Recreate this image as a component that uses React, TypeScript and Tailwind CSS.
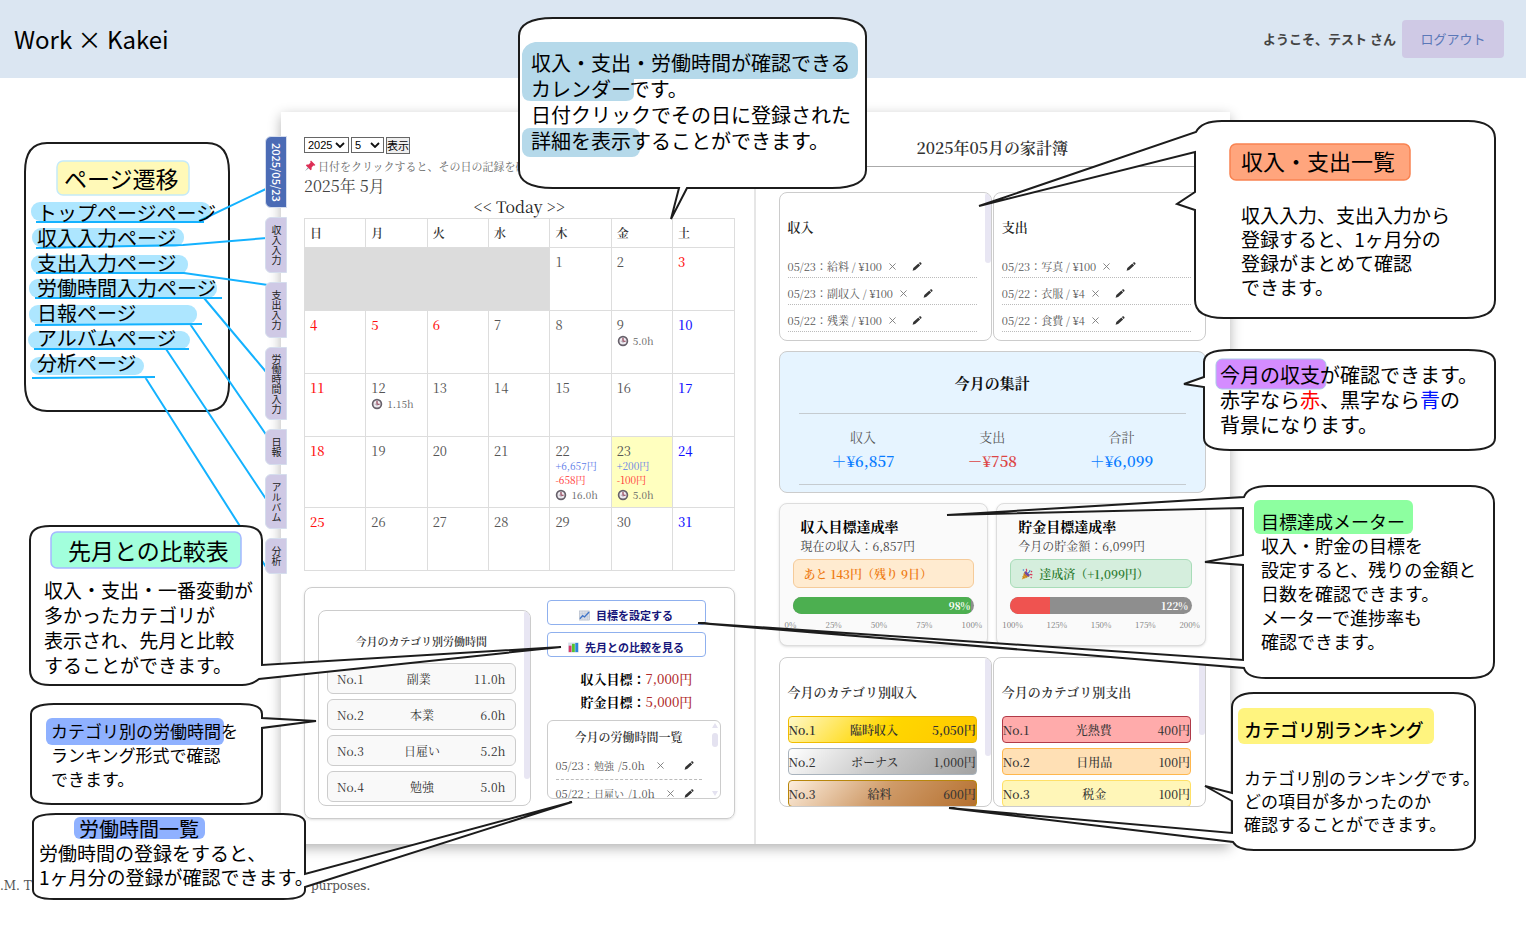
import React from "react";

const SERIF = "font-['Noto_Serif_CJK_JP','Noto_Serif_JP','Liberation_Serif','Noto_Sans_CJK_JP',serif]";

const tabs = [
  { label: "2025/05/23", size: "h-[72px] bg-[#4b6bb5] text-white text-[11px] font-medium" },
  { label: "収入入力", size: "h-[56px] bg-[#cfc9e5] text-[#222] text-[10px]" },
  { label: "支出入力", size: "h-[56px] bg-[#cfc9e5] text-[#222] text-[10px]" },
  { label: "労働時間入力", size: "h-[73px] bg-[#cfc9e5] text-[#222] text-[10px]" },
  { label: "日報", size: "h-[36px] bg-[#cfc9e5] text-[#222] text-[10px]" },
  { label: "アルバム", size: "h-[55px] bg-[#cfc9e5] text-[#222] text-[10px]" },
  { label: "分析", size: "h-[36px] bg-[#cfc9e5] text-[#222] text-[10px]" },
];

type Entry = { income?: string; expense?: string; hours?: string };
const entries: Record<number, Entry> = {
  9: { hours: "5.0h" },
  12: { hours: "1.15h" },
  22: { income: "+6,657円", expense: "-658円", hours: "16.0h" },
  23: { income: "+200円", expense: "-100円", hours: "5.0h" },
};
const holidays = [3, 4, 5, 6, 11, 18, 25];
const saturdays = [10, 17, 24, 31];
const weeks = [
  [1, 2, 3],
  [4, 5, 6, 7, 8, 9, 10],
  [11, 12, 13, 14, 15, 16, 17],
  [18, 19, 20, 21, 22, 23, 24],
  [25, 26, 27, 28, 29, 30, 31],
];

function Pencil() {
  return (
    <svg width="10" height="9" viewBox="0 0 11 10" aria-hidden="true">
      <path d="M0.6 9.6 L1.4 6.6 L7 1.8 L9 3.8 L3.4 8.8 Z" fill="#333" />
      <path d="M7.6 1.2 L8.6 0.4 Q9.2 0 9.8 0.6 L10.4 1.4 Q10.8 2 10.3 2.5 L9.5 3.2 Z" fill="#333" />
    </svg>
  );
}

function Clock() {
  return (
    <svg width="12" height="12" viewBox="0 0 12 12" aria-hidden="true">
      <circle cx="6" cy="6" r="4.4" fill="#eeeaf0" stroke="#66606a" strokeWidth="1.7" />
      <path d="M6 3 V6.2 H8.6" fill="none" stroke="#8a2f45" strokeWidth="1.1" />
      <path d="M3.8 6.2 H6 M6 6.2 V8" fill="none" stroke="#a39da8" strokeWidth="0.8" />
    </svg>
  );
}

function Pin() {
  return (
    <svg width="12" height="12" viewBox="0 0 12 12" aria-hidden="true">
      <path d="M7 0.6 L11.4 5 L10.4 5.8 L9.4 5.5 L7.6 7.4 L7.6 9.4 L6.6 10.2 L1.9 5.5 L2.7 4.5 L4.7 4.5 L6.6 2.6 L6.2 1.6 Z" fill="#dd2e55" />
      <path d="M3.8 7.4 L0.8 11.2 L4.7 8.3 Z" fill="#8899a6" />
    </svg>
  );
}

function LineChart() {
  return (
    <svg width="11" height="11" viewBox="0 0 12 12" aria-hidden="true">
      <rect x="0.5" y="1" width="11" height="10" fill="#d9dfe8" stroke="#a9b2c2" strokeWidth="0.6" />
      <path d="M3.5 1 V11 M6.5 1 V11 M9.2 1 V11 M0.5 4 H11.5 M0.5 7.5 H11.5" stroke="#b6bfd0" strokeWidth="0.4" />
      <path d="M1 9.5 L4 6.2 L6 7.6 L11 2.2" fill="none" stroke="#3f74c8" strokeWidth="1.4" />
    </svg>
  );
}

function BarChart() {
  return (
    <svg width="11" height="11" viewBox="0 0 12 12" aria-hidden="true">
      <rect x="0.2" y="0.6" width="11.6" height="10.8" fill="#d5dde8" />
      <rect x="0.8" y="4" width="3" height="7" fill="#d83a6a" />
      <rect x="4.4" y="2" width="3" height="9" fill="#52c42e" />
      <rect x="8" y="1" width="3" height="10" fill="#2b86d8" />
    </svg>
  );
}

function Popper() {
  return (
    <svg width="12" height="12" viewBox="0 0 12 12" aria-hidden="true">
      <path d="M3.6 3.6 L8.4 8.4 L0.8 11.4 Z" fill="#e0a02c" />
      <path d="M2.6 6 L6 9.4 M1.8 8.4 L3.6 10.2" stroke="#a86a18" strokeWidth="0.9" />
      <ellipse cx="6" cy="6" rx="1.4" ry="3.3" transform="rotate(-45 6 6)" fill="#6d4ba0" />
      <path d="M5 3.6 Q6.4 2.4 5 0.8 M8.4 7 Q10 5.8 11.4 7.2" fill="none" stroke="#d83a5a" strokeWidth="1.1" />
      <path d="M7 5 Q9 4.2 9 2" fill="none" stroke="#3d86d8" strokeWidth="1.1" />
      <circle cx="10.5" cy="3.6" r="0.8" fill="#d83a5a" />
      <circle cx="2.4" cy="2" r="0.8" fill="#3d86d8" />
      <circle cx="10.2" cy="9.6" r="0.8" fill="#d83a5a" />
    </svg>
  );
}

function RowActions({ pushed }: { pushed?: boolean }) {
  return (
    <>
      <button type="button" aria-label="削除" className={pushed ? "ml-2 w-[7px]" : "ml-[7px] w-[7px]"}>
        <svg width="7" height="7" viewBox="0 0 8 8" aria-hidden="true">
          <path d="M0.5 0.5 L7.5 7.5 M7.5 0.5 L0.5 7.5" stroke="#777" strokeWidth="1" />
        </svg>
      </button>
      <button type="button" aria-label="編集" className={pushed ? "mr-2 ml-auto" : "ml-4"}>
        <Pencil />
      </button>
    </>
  );
}

function Picker({ label, value, width }: { label: string; value: string; width: string }) {
  return (
    <span className={"relative inline-block h-4 " + width}>
      <select
        aria-label={label}
        defaultValue={value}
        className="block h-4 w-full appearance-none border border-[#666] bg-white pl-[3px] text-[11px] leading-[14px] text-black"
      >
        <option>{value}</option>
      </select>
      <svg width="10" height="6" viewBox="0 0 10 6" aria-hidden="true" className="pointer-events-none absolute top-[5px] right-1">
        <path d="M1 1 L5 5 L9 1" fill="none" stroke="#111" strokeWidth="1.8" />
      </svg>
    </span>
  );
}

function Calendar() {
  return (
    <table className="w-full table-fixed border-collapse text-left text-[13px] leading-4 text-[#555]">
      <thead>
        <tr className="h-[29px]">
          {["日", "月", "火", "水", "木", "金", "土"].map((d) => (
            <th key={d} className="border border-[#ddd] pl-[5px] text-[12px] font-semibold text-[#333]">
              {d}
            </th>
          ))}
        </tr>
      </thead>
      <tbody>
        {weeks.map((week, i) => (
          <tr key={i} className={i === 3 ? "h-[71px]" : "h-[63px]"}>
            {i === 0 && <td colSpan={4} className="border border-[#ddd] bg-[#dcdcdc]" />}
            {week.map((day) => {
              const e = entries[day];
              const color = holidays.includes(day)
                ? "font-medium text-[#f11]"
                : saturdays.includes(day)
                  ? "font-medium text-[#11f]"
                  : "";
              return (
                <td key={day} className={"border border-[#ddd] pt-[6px] pl-[5px] align-top " + (day === 23 ? "bg-[#ffffbf]" : "")}>
                  <div className={color}>{day}</div>
                  {e?.income && <div className="text-[10px] leading-[14px] text-[#5b7be8]">{e.income}</div>}
                  {e?.expense && <div className="text-[10px] leading-[14px] text-[#f33]">{e.expense}</div>}
                  {e?.hours && (
                    <div className="flex items-center gap-1 text-[10px] text-[#666]">
                      <Clock />
                      {e.hours}
                    </div>
                  )}
                </td>
              );
            })}
          </tr>
        ))}
      </tbody>
    </table>
  );
}

function EntryPanel({ title, rows, thumb }: { title: string; rows: string[]; thumb: boolean }) {
  return (
    <section className="relative h-[149px] overflow-hidden rounded-lg border border-[#ccc] pr-[14px] pl-2">
      <h3 className="pt-6 pb-[14px] text-[13px] leading-5 font-semibold text-[#222]">{title}</h3>
      <ul>
        {rows.map((r) => (
          <li key={r} className="flex h-[27px] items-center border-b border-dotted border-[#bbb] pt-1 text-[11px] text-[#555]">
            {r}
            <RowActions />
          </li>
        ))}
      </ul>
      {thumb && <span className="absolute top-0 right-0 h-[70px] w-[6px] rounded-full bg-[#e8e6f3]" />}
    </section>
  );
}

function RankPanel({ title, rows, thumb }: { title: string; rows: { name: string; value: string; tone: string }[]; thumb: string }) {
  return (
    <section className="relative h-[150px] overflow-hidden rounded-lg border border-[#ccc] pr-[14px] pl-2">
      <h3 className="pt-6 pb-[14px] text-[13px] leading-5 font-semibold text-[#333]">{title}</h3>
      <ol className="flex flex-col gap-[5px]">
        {rows.map((r, i) => (
          <li key={r.name} className={"flex h-[27px] items-center justify-between rounded border text-[12px] text-[#333] " + r.tone}>
            <span>No.{i + 1}</span>
            <span>{r.name}</span>
            <span>{r.value}</span>
          </li>
        ))}
      </ol>
      <span className={"absolute top-0 right-0 w-[6px] rounded-full bg-[#e8e6f3] " + thumb} />
    </section>
  );
}

function Meter({ title, sub, badge, badgeTone, percent, fill, fillTone, ticks }: {
  title: string; sub: string; badge: React.ReactNode; badgeTone: string; percent: string; fill: number; fillTone: string; ticks: string[];
}) {
  return (
    <section className="h-[143px] rounded-lg border border-[#ddd] bg-[#fafafa] px-[13px] pt-3 shadow-sm">
      <h3 className="pl-2 text-[14px] leading-5 font-bold text-black">{title}</h3>
      <p className="pl-2 text-[12px] leading-5 text-[#444]">{sub}</p>
      <div className={"mt-[3px] flex h-[29px] items-center gap-[6px] rounded-md border pl-[10px] text-[12px] font-semibold " + badgeTone}>{badge}</div>
      <div className="relative mt-[9px] h-[17px] overflow-hidden rounded-full bg-[#8e8e8e]">
        <div className={"h-full " + fillTone} style={{ width: `${fill}%` }} />
        <span className="absolute inset-y-0 right-1 text-[10px] leading-[17px] font-bold text-white">{percent}</span>
      </div>
      <div className="-mx-2 mt-[5px] flex justify-between text-[8px] leading-3 text-[#777]">
        {ticks.map((t) => (
          <span key={t}>{t}</span>
        ))}
      </div>
    </section>
  );
}

const workRanks = [
  ["副業", "11.0h"],
  ["本業", "6.0h"],
  ["日雇い", "5.2h"],
  ["勉強", "5.0h"],
];

const workLog = [
  ["05/23 :", "勉強", "/5.0h"],
  ["05/22 :", "日雇い", "/1.0h"],
];

function LeftPage() {
  return (
    <div className="border-r-2 border-[#e6e6e6] pt-[25px] pr-[19px] pb-[25px] pl-[23px]">
      <form className="flex h-[19px] items-start gap-[2px] font-['Liberation_Sans','Noto_Sans_CJK_JP',sans-serif] text-black">
        <Picker label="年" value="2025" width="w-[45px]" />
        <Picker label="月" value="5" width="w-[33px]" />
        <button type="button" className="h-[17px] w-[24px] border border-[#666] bg-[#efefef] text-[11px] leading-4 whitespace-nowrap">
          表示
        </button>
      </form>
      <p className="flex h-5 items-center gap-[2px] overflow-hidden text-[11px] whitespace-nowrap text-[#666]">
        <Pin />
        日付をクリックすると、その日の記録を確認できます
      </p>
      <h2 className="text-[16px] leading-5 text-[#444]">2025年 5月</h2>
      <div className="flex justify-center gap-1 text-[16px] leading-[22px] text-[#222]">
        <a href="#prev">&lt;&lt;</a>
        <a href="#today">Today</a>
        <a href="#next">&gt;&gt;</a>
      </div>
      <Calendar />
      <section className="mt-4 flex h-[232px] gap-4 rounded-lg border border-[#ccc] pr-[13px] pl-[13px] shadow-sm">
        <div className="relative mt-[22px] h-[196px] flex-1 overflow-hidden rounded-lg border border-[#ccc] pr-[14px] pl-2">
          <h3 className="pt-5 pb-3 text-center text-[11px] leading-5 font-semibold text-[#333]">今月のカテゴリ別労働時間</h3>
          <ol className="flex flex-col gap-[5px]">
            {workRanks.map(([name, hours], i) => (
              <li key={name} className="flex h-[31px] shrink-0 items-center justify-between rounded-md border border-[#ccc] bg-[#f9f9f9] px-[9px] text-[12px] text-[#333]">
                <span>No.{i + 1}</span>
                <span>{name}</span>
                <span>{hours}</span>
              </li>
            ))}
          </ol>
          <span className="absolute top-0 right-0 h-[168px] w-[6px] rounded-full bg-[#e8e6f3]" />
        </div>
        <div className="w-[174px] pt-3">
          <div className="flex w-[159px] flex-col gap-[7px] font-['Noto_Sans_CJK_JP',sans-serif] text-[11px] font-bold text-[#16167a]">
            <button type="button" className="flex h-[25px] items-center justify-center gap-[6px] rounded border border-[#8fb0ee] bg-white pt-[6px]">
              <LineChart />
              目標を設定する
            </button>
            <button type="button" className="flex h-[25px] items-center justify-center gap-[6px] rounded border border-[#8fb0ee] bg-white pt-[6px]">
              <BarChart />
              先月との比較を見る
            </button>
          </div>
          <dl className="mt-[10px] pl-[34px] text-[13px] leading-[23px]">
            <div className="flex">
              <dt className="font-bold text-black">収入目標：</dt>
              <dd className="font-medium text-[#b02a2a]">7,000円</dd>
            </div>
            <div className="flex">
              <dt className="font-bold text-black">貯金目標：</dt>
              <dd className="font-medium text-[#b02a2a]">5,000円</dd>
            </div>
          </dl>
          <div className="relative mt-[7px] h-[79px] overflow-hidden rounded-md border border-[#ccc] pr-[18px] pl-2">
            <h3 className="h-[31px] text-center text-[12px] leading-8 font-semibold text-[#333]">今月の労働時間一覧</h3>
            <ul>
              {workLog.map(([date, name, hours]) => (
                <li key={date} className="flex h-[28px] items-center gap-1 border-b border-dashed border-[#bbb] text-[11px] whitespace-nowrap text-[#555]">
                  <span>{date}</span>
                  <span className="text-[10px]">{name}</span>
                  <span>{hours}</span>
                  <RowActions pushed />
                </li>
              ))}
            </ul>
            <span className="absolute inset-y-0 right-0 flex w-[10px] flex-col items-center justify-between py-[2px]">
              <svg width="6" height="5" viewBox="0 0 6 5" aria-hidden="true"><path d="M3 0 L6 5 H0 Z" fill="#e4e2f0" /></svg>
              <svg width="6" height="5" viewBox="0 0 6 5" aria-hidden="true"><path d="M3 5 L6 0 H0 Z" fill="#e4e2f0" /></svg>
            </span>
            <span className="absolute top-3 right-[2px] h-[14px] w-[6px] rounded-full bg-[#e4e2f0]" />
          </div>
        </div>
      </section>
    </div>
  );
}

const totals = [
  { label: "収入", value: "＋¥6,857", tone: "text-[#0a7cff]" },
  { label: "支出", value: "－¥758", tone: "text-[#dc4545]" },
  { label: "合計", value: "＋¥6,099", tone: "text-[#0a7cff]" },
];

function RightPage() {
  return (
    <div className="pt-[26px] pr-6 pb-[37px] pl-[23px]">
      <h2 className="border-b border-[#aaa] pb-2 text-center text-[16px] leading-5 font-semibold text-[#333]">2025年05月の家計簿</h2>
      <div className="mt-[25px] grid grid-cols-2 gap-px">
        <EntryPanel title="収入" thumb rows={["05/23：給料 / ¥100", "05/23：副収入 / ¥100", "05/22：残業 / ¥100"]} />
        <EntryPanel title="支出" thumb={false} rows={["05/23：写真 / ¥100", "05/22：衣服 / ¥4", "05/22：食費 / ¥4"]} />
      </div>
      <section className="mt-[10px] h-[142px] rounded-lg border border-[#ccc] bg-[#e6f4ff] px-[19px] pt-[21px]">
        <h3 className="pb-5 text-center text-[15px] leading-5 font-bold text-[#111]">今月の集計</h3>
        <dl className="grid h-[72px] grid-cols-3 border-y border-[#c5cbd0] pt-[11px] text-center">
          {totals.map((t) => (
            <div key={t.label}>
              <dt className="text-[13px] leading-6 text-[#555]">{t.label}</dt>
              <dd className={"text-[15px] leading-6 font-semibold " + t.tone}>{t.value}</dd>
            </div>
          ))}
        </dl>
      </section>
      <div className="mt-[10px] grid grid-cols-2 gap-2">
        <Meter
          title="収入目標達成率"
          sub="現在の収入：6,857円"
          badge="あと 143円（残り 9日）"
          badgeTone="border-[#f5cb9a] bg-[#ffebd0] text-[#ee7a10]"
          percent="98%"
          fill={98}
          fillTone="bg-[#4caf50]"
          ticks={["0%", "25%", "50%", "75%", "100%"]}
        />
        <Meter
          title="貯金目標達成率"
          sub="今月の貯金額：6,099円"
          badge={<><Popper />達成済（+1,099円）</>}
          badgeTone="border-[#a8dcb8] bg-[#d5eedd] text-[#2e7d32]"
          percent="122%"
          fill={22}
          fillTone="bg-[#ef5350]"
          ticks={["100%", "125%", "150%", "175%", "200%"]}
        />
      </div>
      <div className="mt-[11px] grid grid-cols-2 gap-px">
        <RankPanel
          title="今月のカテゴリ別収入"
          thumb="h-[98px]"
          rows={[
            { name: "臨時収入", value: "5,050円", tone: "font-semibold border-[#f0bd00] bg-linear-[135deg,#fff8c8,#ffd700_50%,#ffc800]" },
            { name: "ボーナス", value: "1,000円", tone: "font-medium border-[#a9b3bd] bg-linear-[135deg,#ffffff,#c8c8c8_50%,#a3a3a3]" },
            { name: "給料", value: "600円", tone: "font-medium border-[#b8860b] bg-linear-[135deg,#fdeedd,#cf9b69_50%,#b5702f]" },
          ]}
        />
        <RankPanel
          title="今月のカテゴリ別支出"
          thumb="h-[77px]"
          rows={[
            { name: "光熱費", value: "400円", tone: "font-medium border-[#b03a48] bg-[#ffabab]" },
            { name: "日用品", value: "100円", tone: "font-medium border-[#ffb74d] bg-[#ffe0b5]" },
            { name: "税金", value: "100円", tone: "font-medium border-[#ffe066] bg-[#fff6b8]" },
          ]}
        />
      </div>
    </div>
  );
}

function Bubbles() {
  return (
    <svg width="1526" height="931" viewBox="0 0 1526 931" aria-hidden="true" className="absolute top-0 left-0">
      <g fill="#ade6ff">
        <rect x="31" y="202" width="180" height="19" rx="9" />
        <rect x="32" y="228" width="152" height="19" rx="9" />
        <rect x="31" y="255" width="157" height="19" rx="9" />
        <rect x="29" y="279" width="188" height="19" rx="9" />
        <rect x="29" y="305" width="168" height="19" rx="9" />
        <rect x="28" y="331" width="162" height="18" rx="9" />
        <rect x="30" y="357" width="114" height="18" rx="9" />
      </g>
      <path d="M47 143 H207 C222 143 229 153 229 172 V384 C229 402 222 411 207 411 H47 C32 411 25 402 25 384 V172 C25 153 32 143 47 143 Z" fill="none" stroke="#1c1c1c" strokeWidth="2" />
      <rect x="57" y="161" width="132" height="34" rx="6" fill="#fff9b8" stroke="#c5eaf8" strokeWidth="1.5" />
      <g fill="none" stroke="#14b2ff" strokeWidth="2">
        <path d="M36 222 H204 M199 221 L268 188" />
        <path d="M36 248 L183 245 L267 238" />
        <path d="M36 273 H184 L268 285" />
        <path d="M35 298 H222 M204 298 L267 373" />
        <path d="M35 325 L202 324 M190 324 L267 436" />
        <path d="M34 349 H189 M166 349 L266 499" />
        <path d="M32 378 L155 377 M145 377 L266 567" />
      </g>
      <g fill="#fff" stroke="#1c1c1c" strokeWidth="2" strokeLinejoin="miter">
        <path d="M553 18 H832 C855 18 866 25 866 36 V170 C866 181 855 188 832 188 H687 L671 219 L679 188 H553 C530 188 519 181 519 170 V36 C519 25 530 18 553 18 Z" />
        <path d="M1222 121 H1468 C1486 121 1495 128 1495 138 V300 C1495 311 1486 318 1466 318 H1224 C1204 318 1195 311 1195 300 V210 L1177 204 L1195 192 V152 L979 206 L1196 132 C1200 124 1210 121 1222 121 Z" />
        <path d="M1230 350 H1468 C1486 350 1495 354 1495 362 V438 C1495 446 1486 450 1468 450 H1230 C1212 450 1204 446 1204 438 V387 L1184 384 L1204 377 V362 C1204 354 1212 350 1230 350 Z" />
        <path d="M1268 486 H1470 C1486 486 1494 493 1494 503 V662 C1494 672 1486 678 1470 678 H1266 C1254 678 1246 675 1244 668 L698 623 L1243 660 V565 L1205 562 L1243 555 V508 L947 515 L1244 497 C1247 489 1256 486 1268 486 Z" />
        <path d="M1254 693 H1453 C1468 693 1475 699 1475 707 V838 C1475 845 1468 850 1453 850 H1254 C1242 850 1236 847 1233 842 L949 808 L1232 833 V801 L1205 786 L1232 793 V707 C1232 699 1240 693 1254 693 Z" />
        <path d="M50 526 H242 C256 526 262 531 262 540 V665 L561 647 L259 679 C254 683 250 685 242 685 H50 C37 685 30 680 30 670 V540 C30 531 37 526 50 526 Z" />
        <path d="M54 704 H240 C255 704 262 708 262 714 V718 L316 721 L262 728 V794 C262 800 255 804 240 804 H52 C38 804 31 800 31 794 V714 C31 708 39 704 54 704 Z" />
        <path d="M56 814 H283 C298 814 305 817 305 823 V874 L572 802 L305 887 V890 C305 896 298 899 283 899 H54 C40 899 33 896 33 890 V823 C33 817 41 814 56 814 Z" />
      </g>
      <path d="M535 42 H847 Q858 42 858 51 V70 Q858 79 848 79 H634 V94 Q634 101 626 101 H531 Q522 101 522 92 V54 Q524 44 535 42 Z" fill="#b5d9ea" />
      <rect x="522" y="128" width="118" height="29" rx="8" fill="#b5d9ea" />
      <rect x="1230" y="144" width="180" height="36" rx="6" fill="#ffa57d" stroke="#f98351" strokeWidth="1.5" />
      <rect x="1216" y="359" width="110" height="30" rx="6" fill="#d48cff" stroke="#a9c9e8" strokeWidth="1" />
      <rect x="1254" y="500" width="159" height="34" rx="6" fill="#8dffa0" />
      <rect x="1238" y="708" width="196" height="36" rx="6" fill="#fff47f" />
      <rect x="51" y="532" width="190" height="36" rx="6" fill="#a2ffdc" stroke="#a4b8ff" strokeWidth="1.5" />
      <rect x="46" y="718" width="178" height="27" rx="6" fill="#8fb1ff" />
      <rect x="74" y="817" width="131" height="22" rx="6" fill="#8fb1ff" />
    </svg>
  );
}

function Note({ at, lines }: { at: string; lines: React.ReactNode[] }) {
  return (
    <div className={"absolute whitespace-nowrap " + at}>
      {lines.map((line, i) => (
        <p key={i}>{line}</p>
      ))}
    </div>
  );
}

function Annotations() {
  return (
    <aside className="pointer-events-none absolute top-0 left-0 font-['Noto_Sans_CJK_JP',sans-serif] text-black">
      <Bubbles />
      <Note at="left-[64px] top-[164px] text-[23px] leading-7" lines={["ページ遷移"]} />
      <Note
        at="left-[37px] top-[200px] text-[20px] leading-[25px]"
        lines={["トップページページ", "収入入力ページ", "支出入力ページ", "労働時間入力ページ", "日報ページ", "アルバムページ", "分析ページ"]}
      />
      <Note
        at="left-[531px] top-[50px] text-[20px] leading-[26px]"
        lines={["収入・支出・労働時間が確認できる", "カレンダーです。", "日付クリックでその日に登録された", "詳細を表示することができます。"]}
      />
      <Note at="left-[1241px] top-[146px] text-[22px] leading-7" lines={["収入・支出一覧"]} />
      <Note
        at="left-[1241px] top-[203px] text-[19px] leading-6"
        lines={["収入入力、支出入力から", "登録すると、1ヶ月分の", "登録がまとめて確認", "できます。"]}
      />
      <Note
        at="left-[1220px] top-[362px] text-[20px] leading-[25px]"
        lines={[
          "今月の収支が確認できます。",
          <>赤字なら<span className="text-[#f00]">赤</span>、黒字なら<span className="text-[#01f]">青</span>の</>,
          "背景になります。",
        ]}
      />
      <Note
        at="left-[1261px] top-[509px] text-[18px] leading-6"
        lines={["目標達成メーター", "収入・貯金の目標を", "設定すると、残りの金額と", "日数を確認できます。", "メーターで進捗率も", "確認できます。"]}
      />
      <Note at="left-[1244px] top-[715px] text-[18px] leading-7 font-medium" lines={["カテゴリ別ランキング"]} />
      <Note
        at="left-[1244px] top-[766px] text-[17px] leading-[23px]"
        lines={["カテゴリ別のランキングです。", "どの項目が多かったのか", "確認することができます。"]}
      />
      <Note at="left-[68px] top-[536px] text-[23px] leading-7" lines={["先月との比較表"]} />
      <Note
        at="left-[44px] top-[577px] text-[19px] leading-[25px]"
        lines={["収入・支出・一番変動が", "多かったカテゴリが", "表示され、先月と比較", "することができます。"]}
      />
      <Note
        at="left-[51px] top-[719px] text-[17px] leading-6"
        lines={["カテゴリ別の労働時間を", "ランキング形式で確認", "できます。"]}
      />
      <Note at="left-[79px] top-[817px] text-[20px] leading-6" lines={["労働時間一覧"]} />
      <Note at="left-[39px] top-[841px] text-[19px] leading-6" lines={["労働時間の登録をすると、", "1ヶ月分の登録が確認できます。"]} />
    </aside>
  );
}

export default function App() {
  return (
    <div className={"relative min-h-screen overflow-hidden bg-white " + SERIF}>
      <header className="flex h-[78px] items-center justify-between bg-[#dbe6f2] pr-[22px] pl-[14px] font-['Noto_Sans_CJK_JP',sans-serif]">
        <h1 className="text-[24px] text-black">Work × Kakei</h1>
        <div className="flex items-center gap-[6px] text-[13px]">
          <span className="font-bold text-[#444]">ようこそ、テスト さん</span>
          <button type="button" className="h-[38px] w-[102px] rounded bg-[#cfc9e5] text-[#5b78b8]">
            ログアウト
          </button>
        </div>
      </header>
      <main className="flex pt-[34px] pr-[296px] pl-[265px]">
        <nav className="z-10 -mr-[6px] flex w-[22px] shrink-0 flex-col gap-[9px] pt-6 font-['Noto_Sans_CJK_JP',sans-serif]">
          {tabs.map((t) => (
            <a
              key={t.label}
              href="#tab"
              className={"flex w-[22px] items-center justify-center rounded-l-md border border-[#d5dded] leading-none whitespace-nowrap [writing-mode:vertical-rl] " + t.size}
            >
              {t.label}
            </a>
          ))}
        </nav>
        <div className="grid flex-1 grid-cols-2 bg-white shadow-[0_4px_12px_rgba(0,0,0,0.3)]">
          <LeftPage />
          <RightPage />
        </div>
      </main>
      <footer className="flex pt-[34px] font-['DejaVu_Serif',serif] text-[12px] leading-4 text-[#555]">
        <span className="w-[311px]">.M. Th</span>
        <span>purposes.</span>
      </footer>
      <Annotations />
    </div>
  );
}
